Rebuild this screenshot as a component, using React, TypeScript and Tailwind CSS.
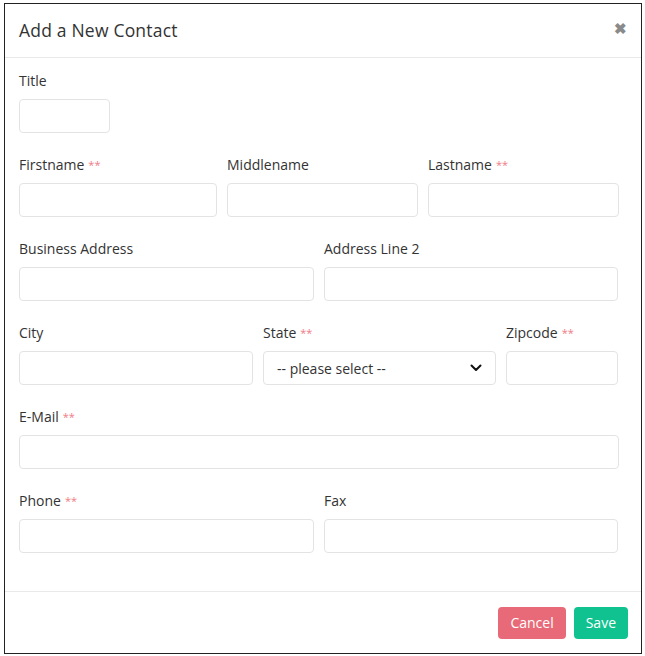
import React from 'react';

const font = { fontFamily: '"Open Sans", "Liberation Sans", sans-serif' };

interface FieldProps {
  label: string;
  required?: boolean;
  children?: React.ReactNode;
}

const Field: React.FC<FieldProps> = ({ label, required, children }) => (
  <div className="flex flex-col">
    <label className="text-[14px] leading-[20px] font-medium text-[#333] mb-[8px]">
      {label}
      {required && <span className="text-[#f07b86] text-[11px] ml-[4px] align-top">**</span>}
    </label>
    {children ?? <input className="h-[34px] w-full rounded-[4px] border border-[#e3e3e3] bg-white outline-none" />}
  </div>
);

const App: React.FC = () => {
  return (
    <div className="pt-[3px] pl-[4px] bg-white" style={font}>
      <div className="w-[638px] h-[651px] border border-[#222] flex flex-col bg-white">
        {/* Header */}
        <div className="h-[54px] border-b border-[#e9e9e9] flex items-center justify-between pl-[14px] pr-[14px] shrink-0">
          <h2 className="text-[17.5px] tracking-[0.2px] text-[#333] font-normal">Add a New Contact</h2>
          <span className="text-[#8a8a8a] text-[15px] font-bold leading-none -mt-[4px]">✖</span>
        </div>

        {/* Body */}
        <div className="flex-1 pt-[13px] pl-[14px] pr-[22px] flex flex-col gap-[22px]">
          <div className="w-[91px]">
            <Field label="Title" />
          </div>
          <div className="grid grid-cols-[198px_191px_191px] gap-x-[10px]">
            <Field label="Firstname" required />
            <Field label="Middlename" />
            <Field label="Lastname" required />
          </div>
          <div className="grid grid-cols-[295px_294px] gap-x-[10px]">
            <Field label="Business Address" />
            <Field label="Address Line 2" />
          </div>
          <div className="grid grid-cols-[234px_233px_112px] gap-x-[10px]">
            <Field label="City" />
            <Field label="State" required>
              <div className="h-[34px] w-full rounded-[4px] border border-[#e3e3e3] bg-white flex items-center justify-between pl-[13px] pr-[13px]">
                <span className="text-[14px] text-[#333]">-- please select --</span>
                <svg width="12" height="8" viewBox="0 0 12 8" fill="none">
                  <path d="M1.5 1.5L6 6L10.5 1.5" stroke="#111" strokeWidth="2" strokeLinecap="round" strokeLinejoin="round" />
                </svg>
              </div>
            </Field>
            <Field label="Zipcode" required />
          </div>
          <Field label="E-Mail" required />
          <div className="grid grid-cols-[295px_294px] gap-x-[10px]">
            <Field label="Phone" required />
            <Field label="Fax" />
          </div>
        </div>

        {/* Footer */}
        <div className="h-[62px] border-t border-[#e9e9e9] flex items-center justify-end gap-[8px] pr-[13px] shrink-0">
          <button className="h-[32px] px-[12px] rounded-[4px] bg-[#e86a78] text-white text-[14px]">Cancel</button>
          <button className="h-[32px] px-[12px] rounded-[4px] bg-[#10c28f] text-white text-[14px]">Save</button>
        </div>
      </div>
    </div>
  );
};

export default App;
